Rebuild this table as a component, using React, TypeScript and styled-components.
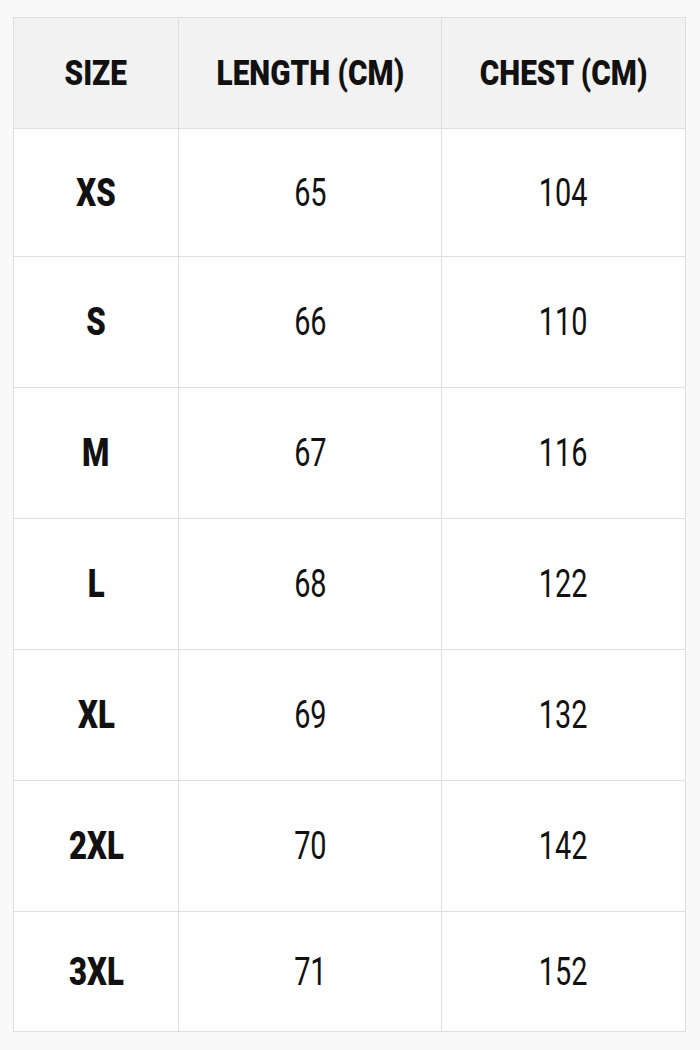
import React from 'react';
import styled, { createGlobalStyle } from 'styled-components';

const GlobalStyle = createGlobalStyle`
  html, body {
    margin: 0;
    padding: 0;
    background: #f9f9f9;
  }
  body {
    font-family: "Roboto", "DejaVu Sans Condensed", sans-serif;
    color: #111111;
  }
`;

const Page = styled.div`
  width: 700px;
  height: 1050px;
  box-sizing: border-box;
  padding: 17px 15px 0 13px;
`;

const Table = styled.table`
  width: 669px;
  border-collapse: collapse;
  table-layout: fixed;
  background: #fefefe;
`;

const HeadCell = styled.th<{ $w: number }>`
  width: ${(p) => p.$w}px;
  height: 110px;
  padding: 0;
  background: #f2f2f2;
  border: 1px solid #dedede;
  font-size: 35px;
  font-weight: 900;
  text-align: center;
  vertical-align: middle;
`;

const Row = styled.tr<{ $h: number }>`
  height: ${(p) => p.$h}px;
`;

const SizeCell = styled.td`
  padding: 0;
  border: 1px solid #dedede;
  font-size: 38px;
  font-weight: 900;
  text-align: center;
`;

const ValueCell = styled.td`
  padding: 0;
  border: 1px solid #dedede;
  font-size: 38px;
  font-weight: 400;
  text-align: center;
`;

// Roboto squeezed to read like the condensed face in the picture
const Condensed = styled.span<{ $sx: number }>`
  display: inline-block;
  white-space: nowrap;
  transform: scaleX(${(p) => p.$sx});
`;

const rows = [
  { size: 'XS', length: 65, chest: 104, h: 128 },
  { size: 'S', length: 66, chest: 110, h: 131 },
  { size: 'M', length: 67, chest: 116, h: 131 },
  { size: 'L', length: 68, chest: 122, h: 131 },
  { size: 'XL', length: 69, chest: 132, h: 131 },
  { size: '2XL', length: 70, chest: 142, h: 131 },
  { size: '3XL', length: 71, chest: 152, h: 120 },
];

export default function App() {
  return (
    <Page>
      <GlobalStyle />
      <Table>
        <thead>
          <tr>
            <HeadCell $w={164}>
              <Condensed $sx={0.85}>SIZE</Condensed>
            </HeadCell>
            <HeadCell $w={262}>
              <Condensed $sx={0.85}>LENGTH (CM)</Condensed>
            </HeadCell>
            <HeadCell $w={243}>
              <Condensed $sx={0.85}>CHEST (CM)</Condensed>
            </HeadCell>
          </tr>
        </thead>
        <tbody>
          {rows.map((r) => (
            <Row key={r.size} $h={r.h}>
              <SizeCell>
                <Condensed $sx={0.82}>{r.size}</Condensed>
              </SizeCell>
              <ValueCell>
                <Condensed $sx={0.76}>{r.length}</Condensed>
              </ValueCell>
              <ValueCell>
                <Condensed $sx={0.76}>{r.chest}</Condensed>
              </ValueCell>
            </Row>
          ))}
        </tbody>
      </Table>
    </Page>
  );
}
